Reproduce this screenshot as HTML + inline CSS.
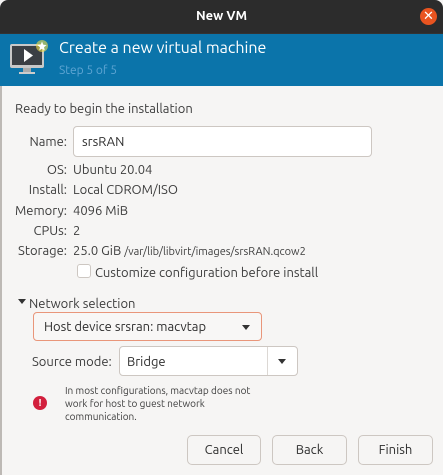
<!DOCTYPE html>
<html><head><style>
*{margin:0;padding:0;box-sizing:border-box}
body{width:443px;height:475px;background:#f6f5f4;font-family:"Ubuntu","Liberation Sans",sans-serif;font-size:13px;color:#3d3d3d;position:relative;overflow:hidden}
.a{position:absolute;white-space:nowrap}
.title{left:0;top:0;width:443px;height:33px;background:#2c2c2c;border-radius:8px 8px 0 0}
.banner{left:0;top:33px;width:443px;height:53px;background:#0b74aa;border-top:1px solid #333}
.lbl{right:376px;text-align:right}
.btn{border:1px solid #cdc7c2;border-radius:5px;background:#f6f5f4;height:30px;top:435px;text-align:center;line-height:29px;font-size:13px;color:#2e2e2e}
</style></head><body>
<div class="a" style="left:0;top:86px;width:2px;height:389px;background:#bdb9b5"></div>
<div class="a title"></div>
<div class="a" style="left:0;top:9px;width:443px;text-align:center;color:#fff;font-weight:bold;font-size:13px">New VM</div>
<div class="a" style="left:420px;top:8px;width:17px;height:17px;border-radius:50%;background:#e95420;color:#fff;font-size:13px;line-height:17px;text-align:center">✕</div>
<div class="a banner"></div>
<svg class="a" style="left:8px;top:38px" width="42" height="40" viewBox="0 0 42 40">
<rect x="2" y="6" width="34" height="24" rx="2" fill="#c8c8c8"/>
<rect x="4" y="8" width="30" height="19" fill="#3b3f44"/>
<path d="M16 11 L25 17.5 L16 24 Z" fill="#fff"/>
<rect x="15" y="30" width="8" height="4" fill="#aaa"/>
<rect x="11" y="34" width="16" height="2" fill="#ccc"/>
<circle cx="34" cy="8" r="6" fill="#f3e04a" opacity=".6"/>
<path d="M34 3.5 L35.3 6.8 L38.6 7 L36 9.2 L36.8 12.5 L34 10.7 L31.2 12.5 L32 9.2 L29.4 7 L32.7 6.8 Z" fill="#fff"/>
</svg>
<div class="a" style="left:59px;top:39px;color:#fff;font-size:16px">Create a new virtual machine</div>
<div class="a" style="left:59px;top:64px;color:#5ea5d3;font-size:12px">Step 5 of 5</div>
<div class="a" style="left:15px;top:102px">Ready to begin the installation</div>
<div class="a lbl" style="top:135px">Name:</div>
<div class="a" style="left:73px;top:126px;width:299px;height:31px;background:#fff;border:1px solid #cdc7c2;border-radius:4px;padding:8px 8px;color:#2e2e2e">srsRAN</div>
<div class="a lbl" style="top:163px">OS:</div><div class="a" style="left:73px;top:163px">Ubuntu 20.04</div>
<div class="a lbl" style="top:183px">Install:</div><div class="a" style="left:73px;top:183px">Local CDROM/ISO</div>
<div class="a lbl" style="top:204px">Memory:</div><div class="a" style="left:73px;top:204px">4096 MiB</div>
<div class="a lbl" style="top:224px">CPUs:</div><div class="a" style="left:73px;top:224px">2</div>
<div class="a lbl" style="top:244px">Storage:</div><div class="a" style="left:73px;top:244px">25.0 GiB <span style="font-size:11px">/var/lib/libvirt/images/srsRAN.qcow2</span></div>
<div class="a" style="left:77px;top:264px;width:14px;height:14px;border:1px solid #cdc7c2;border-radius:3px;background:#fff"></div>
<div class="a" style="left:95px;top:266px">Customize configuration before install</div>
<div class="a" style="left:18px;top:299px;width:0;height:0;border-left:4px solid transparent;border-right:4px solid transparent;border-top:5px solid #333"></div>
<div class="a" style="left:29px;top:297px">Network selection</div>
<div class="a" style="left:33px;top:312px;width:229px;height:29px;border:1px solid #e9967a;border-radius:4px;background:#f8f7f6;padding:7px 10px;color:#2e2e2e">Host device srsran: macvtap</div>
<div class="a" style="left:242px;top:325px;border-left:4px solid transparent;border-right:4px solid transparent;border-top:5px solid #333"></div>
<div class="a" style="left:32px;top:355px">Source mode:</div>
<div class="a" style="left:119px;top:346px;width:179px;height:30px;border:1px solid #cdc7c2;border-radius:4px;background:#fff;padding:8px 7px;color:#2e2e2e">Bridge</div>
<div class="a" style="left:267px;top:347px;width:1px;height:28px;background:#dcd8d4"></div>
<div class="a" style="left:278px;top:359px;border-left:4px solid transparent;border-right:4px solid transparent;border-top:5px solid #333"></div>
<div class="a" style="left:33px;top:396px;width:14px;height:14px;border-radius:50%;background:#d21f3c;color:#fff;font-size:10px;font-weight:bold;text-align:center;line-height:14px">!</div>
<div class="a" style="left:65px;top:384px;font-size:10px;line-height:13px;color:#3d3d3d">In most configurations, macvtap does not<br>work for host to guest network<br>communication.</div>
<div class="a btn" style="left:187px;width:74px">Cancel</div>
<div class="a btn" style="left:272px;width:75px">Back</div>
<div class="a btn" style="left:358px;width:75px">Finish</div>
</body></html>
